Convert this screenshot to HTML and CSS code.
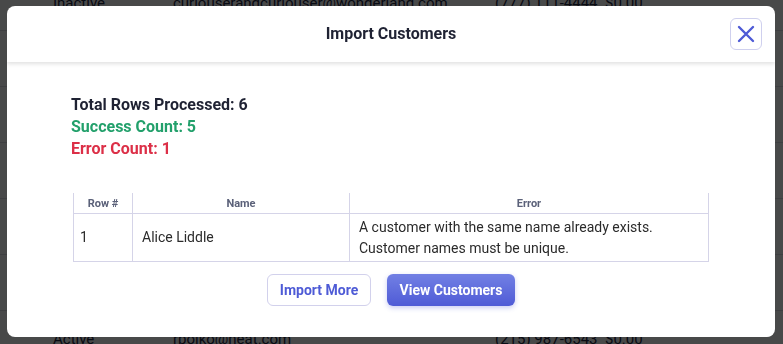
FILE: index.html
```html
<!DOCTYPE html>
<html lang="en">
<head>
    <meta charset="UTF-8">
    <meta name="viewport" content="width=device-width, initial-scale=1.0">
    <title>Import Customers</title>
    <link rel="stylesheet" href="styles.css">
</head>
<body>
    <div class="page">
        <div class="bg-row">
            <span>Inactive</span>
            <span>curiouserandcuriouser@wonderland.com</span>
            <span>(777) 111-4444</span>
            <span>$0.00</span>
        </div>
        <div class="bg-row"></div>
        <div class="bg-row"></div>
        <div class="bg-row"></div>
        <div class="bg-row"></div>
        <div class="bg-row"></div>
        <div class="bg-row">
            <span>Active</span>
            <span>rpolko@neat.com</span>
            <span>(215) 987-6543</span>
            <span>$0.00</span>
        </div>
    </div>

    <div class="overlay"></div>

    <div class="modal">
        <div class="modal-header">
            <h2>Import Customers</h2>
            <button class="close-button" aria-label="Close">
                <svg width="18" height="18" viewBox="0 0 18 18" fill="none" stroke="currentColor" stroke-width="2.4" stroke-linecap="round">
                    <path d="M2 2 L16 16 M16 2 L2 16"/>
                </svg>
            </button>
        </div>
        <div class="modal-body">
            <div class="stats">
                <p class="total">Total Rows Processed: 6</p>
                <p class="success">Success Count: 5</p>
                <p class="error">Error Count: 1</p>
            </div>
            <table class="errors-table">
                <thead>
                    <tr>
                        <th class="col-row">Row #</th>
                        <th class="col-name">Name</th>
                        <th>Error</th>
                    </tr>
                </thead>
                <tbody>
                    <tr>
                        <td>1</td>
                        <td class="name-cell">Alice Liddle</td>
                        <td class="name-cell">A customer with the same name already exists.<br>Customer names must be unique.</td>
                    </tr>
                </tbody>
            </table>
            <div class="actions">
                <button class="btn btn-outline">Import More</button>
                <button class="btn btn-primary">View Customers</button>
            </div>
        </div>
    </div>
</body>
</html>
```

FILE: styles.css
```css
body {
    margin: 0;
    background-color: #f1f3f5;
    font-family: Roboto, "Liberation Sans", Arial, sans-serif;
    overflow: hidden;
}
.page {
    margin-top: -25px;
}
.bg-row {
    display: grid;
    grid-template-columns: 120px 322px 110px 1fr;
    align-items: center;
    height: 55px;
    border-bottom: 1px solid #d0d4da;
    padding-left: 53px;
    font-size: 15px;
    color: #1b2640;
}
.overlay {
    position: fixed;
    inset: 0;
    background-color: rgba(0, 0, 0, 0.7);
}
.modal {
    position: fixed;
    left: 7px;
    top: 6px;
    width: 768px;
    height: 331px;
    background-color: #fff;
    border-radius: 8px;
    overflow: hidden;
}
.modal-header {
    position: relative;
    height: 54px;
    padding-bottom: 2px;
    display: flex;
    align-items: center;
    justify-content: center;
    box-shadow: 0 2px 4px rgba(0, 0, 0, 0.12);
}
.modal-header h2 {
    margin: 0;
    font-size: 16px;
    font-weight: 700;
    color: #1f2233;
}
.close-button {
    position: absolute;
    right: 13px;
    top: 12px;
    width: 32px;
    height: 32px;
    display: flex;
    align-items: center;
    justify-content: center;
    padding: 0;
    background-color: #fff;
    border: 1px solid #cfd0ee;
    border-radius: 6px;
    color: #4e5bd6;
}
.modal-body {
    padding: 32px 0 0;
}
.stats {
    padding-left: 64px;
    margin-bottom: 33px;
}
.stats p {
    margin: 0;
    font-size: 16px;
    font-weight: 700;
    line-height: 22px;
}
.total {
    color: #1f2233;
}
.success {
    color: #22a06b;
}
.error {
    color: #dc2f47;
}
.errors-table {
    width: 636px;
    margin: 0 auto;
    border-collapse: collapse;
}
.errors-table th,
.errors-table td {
    border: 1px solid #d5d4e8;
}
.errors-table thead th {
    border-top: none;
    height: 20px;
    padding: 0;
    font-size: 11px;
    font-weight: 700;
    color: #5b6179;
    text-align: center;
}
.col-row {
    width: 58px;
}
.col-name {
    width: 216px;
}
.errors-table td {
    height: 47px;
    padding: 0 6px;
    font-size: 14px;
    line-height: 21px;
    color: #2b2b2b;
}
.errors-table td.name-cell {
    padding: 0 9px;
}
.actions {
    display: flex;
    justify-content: center;
    gap: 16px;
    margin-top: 12px;
}
.btn {
    height: 32px;
    padding: 0;
    font-family: inherit;
    font-size: 14px;
    font-weight: 700;
    white-space: nowrap;
    border-radius: 6px;
    cursor: pointer;
}
.btn-outline {
    width: 104px;
    background-color: #fff;
    border: 1px solid #d2d1ec;
    color: #4e5bd6;
}
.btn-primary {
    width: 128px;
    border: none;
    color: #fff;
    background: linear-gradient(#7280e4, #4f5bd6);
    box-shadow: 0 2px 5px rgba(79, 91, 214, 0.3);
}
```
